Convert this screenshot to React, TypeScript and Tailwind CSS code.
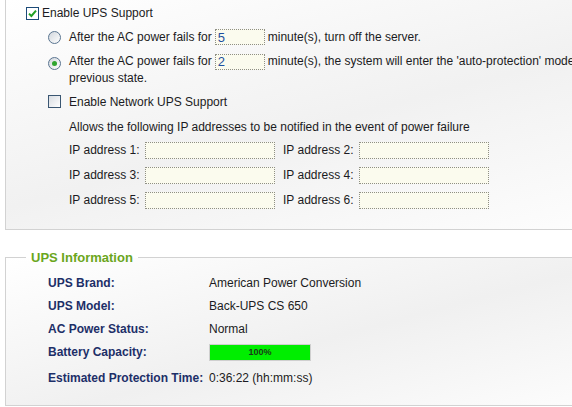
import React from "react";

function CheckBox({ checked }: { checked?: boolean }) {
  return (
    <span
      className={
        checked
          ? "inline-flex h-[13px] w-[13px] shrink-0 items-center justify-center border border-[#1c4a78] bg-white"
          : "inline-flex h-[13px] w-[13px] shrink-0 items-center justify-center border border-[#3a5672] bg-linear-to-br from-[#d9dde2] to-white"
      }
    >
      {checked && (
        <svg width="9" height="9" viewBox="0 0 9 9">
          <path d="M1 4.6 L3.4 7 L8 1.6" stroke="#22a023" strokeWidth="2" fill="none" />
        </svg>
      )}
    </span>
  );
}

function Radio({ checked }: { checked?: boolean }) {
  return (
    <span className="inline-flex h-[13px] w-[13px] shrink-0 items-center justify-center rounded-full border border-[#5a7591] bg-linear-to-br from-[#d2d7dd] to-white">
      {checked && <span className="h-[5px] w-[5px] rounded-full bg-[#2fa52f]" />}
    </span>
  );
}

function MinInput({ value }: { value: string }) {
  return (
    <span className="mx-[3px] inline-flex h-[16px] w-[50px] items-center border border-dotted border-[#8f8f85] bg-[#fbfbee] px-[2px] align-middle text-[13px] leading-none text-[#1d4f9e]">
      {value}
    </span>
  );
}

function IpField({ label }: { label: string }) {
  return (
    <div className="flex items-center">
      <span className="w-[76px]">{label}</span>
      <span className="h-[17px] w-[130px] border border-dotted border-[#8f8f85] bg-[#fbfbee]" />
    </div>
  );
}

const info = [
  { label: "UPS Brand:", value: "American Power Conversion" },
  { label: "UPS Model:", value: "Back-UPS CS 650" },
  { label: "AC Power Status:", value: "Normal" },
];

export default function App() {
  return (
    <div className="h-[407px] w-[572px] overflow-hidden bg-white font-['Liberation_Sans',Arial,sans-serif] text-[12px] leading-[16px] text-[#1b1b22]">
      {/* UPS settings */}
      <div className="ml-[5px] w-[700px] border-b border-l border-[#d2d2d2] bg-linear-[165deg] from-white via-[#f1f1f1] to-white pb-[20px]">
        <div className="flex h-[26px] items-center pl-[20px]">
          <CheckBox checked />
          <span className="ml-[3px]">Enable UPS Support</span>
        </div>

        <div className="mt-[3px] flex h-[16px] items-center whitespace-nowrap pl-[42px]">
          <Radio />
          <span className="ml-[8px]">
            After the AC power fails for
            <MinInput value="5" />
            minute(s), turn off the server.
          </span>
        </div>

        <div className="mt-[8px] flex items-start whitespace-nowrap pl-[42px]">
          <span className="mt-[1px]">
            <Radio checked />
          </span>
          <span className="ml-[8px]">
            After the AC power fails for
            <MinInput value="2" />
            minute(s), the system will enter the 'auto-protection' mode. When the power is restored, the system will resume to its
            <br />
            previous state.
          </span>
        </div>

        <div className="mt-[8px] flex h-[16px] items-center pl-[42px]">
          <CheckBox />
          <span className="ml-[8px]">Enable Network UPS Support</span>
        </div>

        <div className="mt-[9px] h-[16px] pl-[63px]">
          Allows the following IP addresses to be notified in the event of power failure
        </div>

        <div className="mt-[7px] flex flex-col gap-[8px] pl-[63px]">
          {[
            ["IP address 1:", "IP address 2:"],
            ["IP address 3:", "IP address 4:"],
            ["IP address 5:", "IP address 6:"],
          ].map(([a, b]) => (
            <div key={a} className="flex gap-[8px]">
              <IpField label={a} />
              <IpField label={b} />
            </div>
          ))}
        </div>
      </div>

      {/* UPS Information */}
      <fieldset className="mt-[20px] ml-[5px] w-[700px] border border-[#d2d2d2] bg-linear-[165deg] from-white via-[#f0f0f0] to-white pt-[6px] pb-[15px] pl-[42px]">
        <legend className="-ml-[22px] px-[5px] text-[13px] font-bold leading-[16px] text-[#6aa61c]">
          UPS Information
        </legend>
        {info.map((row) => (
          <div key={row.label} className="flex h-[23px] items-center">
            <span className="w-[161px] font-bold text-[#1d2f68]">{row.label}</span>
            <span>{row.value}</span>
          </div>
        ))}
        <div className="flex h-[23px] items-center">
          <span className="w-[161px] font-bold text-[#1d2f68]">Battery Capacity:</span>
          <span className="flex h-[17px] w-[102px] items-center justify-center border border-[#cfcfcf] bg-[#00ee00] text-[9px] font-bold leading-none text-[#1a3a1a]">
            100%
          </span>
        </div>
        <div className="mt-[3px] flex h-[23px] items-center">
          <span className="w-[161px] font-bold text-[#1d2f68]">Estimated Protection Time:</span>
          <span>0:36:22 (hh:mm:ss)</span>
        </div>
      </fieldset>
    </div>
  );
}
